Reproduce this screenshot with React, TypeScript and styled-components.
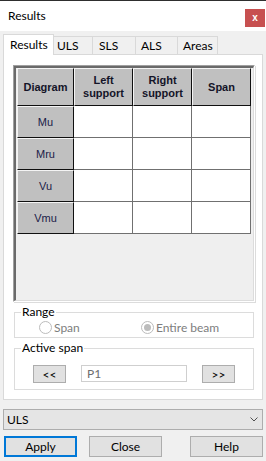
import React from "react";
import styled, { createGlobalStyle } from "styled-components";

const GlobalStyle = createGlobalStyle`
    html, body {
        margin: 0;
        padding: 0;
        background: #f0f0f0;
    }
    * {
        box-sizing: border-box;
    }
`;

const rows = ["Mu", "Mru", "Vu", "Vmu"];
const tabs = [
    { label: "Results", width: 51, pad: 6 },
    { label: "ULS", width: 40, pad: 3 },
    { label: "SLS", width: 44, pad: 6 },
    { label: "ALS", width: 43, pad: 5 },
    { label: "Areas", width: 41, pad: 5 },
];

export default function App() {
    return (
        <Window>
            <GlobalStyle />
            <TitleBar>
                <Title>Results</Title>
                <CloseButton>x</CloseButton>
            </TitleBar>

            <TabRow>
                {tabs.map((t, i) => (
                    <Tab key={t.label} $active={i === 0} $width={t.width} $pad={t.pad}>
                        {t.label}
                    </Tab>
                ))}
            </TabRow>

            <Panel>
                <GridFrame>
                    <GridInner>
                        <Table>
                            <HeaderCell>Diagram</HeaderCell>
                            <HeaderCell>
                                Left
                                <br />
                                support
                            </HeaderCell>
                            <HeaderCell>
                                Right
                                <br />
                                support
                            </HeaderCell>
                            <HeaderCell>Span</HeaderCell>
                            {rows.map((r) => (
                                <React.Fragment key={r}>
                                    <RowLabel>{r}</RowLabel>
                                    <DataCell />
                                    <DataCell />
                                    <DataCell />
                                </React.Fragment>
                            ))}
                        </Table>
                    </GridInner>
                </GridFrame>

                <Group $gap={3}>
                    <Legend>Range</Legend>
                    <RadioRow>
                        <RadioItem>
                            <RadioCircle />
                            Span
                        </RadioItem>
                        <RadioItem>
                            <RadioCircle $checked />
                            Entire beam
                        </RadioItem>
                    </RadioRow>
                </Group>

                <Group $gap={3}>
                    <Legend>Active span</Legend>
                    <SpanRow>
                        <SmallButton>&lt;&lt;</SmallButton>
                        <SpanInput>P1</SpanInput>
                        <SmallButton>&gt;&gt;</SmallButton>
                    </SpanRow>
                </Group>
            </Panel>

            <Select>
                <span>ULS</span>
                <svg width="8" height="5" viewBox="0 0 8 5">
                    <path d="M0.5 0.5 L4 4 L7.5 0.5" fill="none" stroke="#505050" strokeWidth="1" />
                </svg>
            </Select>

            <ButtonRow>
                <DialogButton $primary>Apply</DialogButton>
                <DialogButton>Close</DialogButton>
                <DialogButton $push>Help</DialogButton>
            </ButtonRow>
        </Window>
    );
}

const Window = styled.div`
    width: 266px;
    height: 461px;
    display: flex;
    flex-direction: column;
    overflow: hidden;
    background: #f0f0f0;
    border-top: 1px solid #2e2e2e;
    font-family: Lato, "Liberation Sans", sans-serif;
    font-size: 12px;
    color: #000;
`;

const TitleBar = styled.div`
    height: 30px;
    flex: none;
    display: flex;
    align-items: flex-start;
    justify-content: space-between;
    padding: 0 1px 0 8px;
    background: #fff;
`;

const Title = styled.div`
    margin-top: 7px;
    line-height: 15px;
    font-size: 12px;
`;

const CloseButton = styled.div`
    width: 20px;
    height: 18px;
    margin-top: 8px;
    background: #c75050;
    color: #fff;
    font-family: "Liberation Sans", Arial, sans-serif;
    font-weight: bold;
    font-size: 10px;
    display: flex;
    align-items: center;
    justify-content: center;
    padding-bottom: 1px;
`;

const TabRow = styled.div`
    height: 20px;
    margin-top: 3px;
    padding-left: 3px;
    display: flex;
    align-items: flex-start;
    position: relative;
    z-index: 1;
`;

const Tab = styled.div<{ $active?: boolean; $width: number; $pad: number }>`
    width: ${(p) => p.$width}px;
    height: ${(p) => (p.$active ? 21 : 18)}px;
    margin-top: ${(p) => (p.$active ? 0 : 2)}px;
    margin-left: ${(p) => (p.$active ? 0 : -1)}px;
    padding: ${(p) => (p.$active ? 2 : 1)}px 0 0 ${(p) => p.$pad}px;
    line-height: 15px;
    border: 1px solid #d9d9d9;
    border-bottom: none;
    background: ${(p) => (p.$active ? "#fff" : "#f0f0f0")};
    position: relative;
    z-index: ${(p) => (p.$active ? 2 : 1)};
    white-space: nowrap;
`;

const Panel = styled.div`
    height: 346px;
    flex: none;
    margin: 0 3px;
    padding: 10px 0 0 9px;
    background: #fff;
    border: 1px solid #d9d9d9;
    display: flex;
    flex-direction: column;
`;

const GridFrame = styled.div`
    width: 242px;
    height: 237px;
    flex: none;
    border-top: 1px solid #a0a0a0;
    border-left: 1px solid #a0a0a0;
    border-right: 1px solid #fff;
    border-bottom: 1px solid #fff;
    box-shadow: 1px 1px 0 #dcdcdc;
`;

const GridInner = styled.div`
    height: 100%;
    background: #efefef;
    border-top: 2px solid #6a6a6a;
    border-left: 2px solid #6a6a6a;
    border-right: 1px solid #dcdcdc;
    border-bottom: 1px solid #dcdcdc;
    padding-left: 1px;
`;

const Table = styled.div`
    display: grid;
    grid-template-columns: 57px 59px 59px 59px;
    grid-template-rows: 38px repeat(4, 32px);
    font-family: "Liberation Sans", Arial, sans-serif;
    font-size: 11px;
`;

const FixedCell = styled.div`
    background: #c0c0c0;
    border-top: 1px solid #f4f4f4;
    border-left: 1px solid #f4f4f4;
    border-right: 1px solid #101010;
    border-bottom: 1px solid #101010;
    display: flex;
    align-items: center;
    justify-content: center;
    text-align: center;
`;

const HeaderCell = styled(FixedCell)`
    font-weight: bold;
    line-height: 13px;
    color: #141428;
`;

const RowLabel = styled(FixedCell)`
    color: #1b2148;
`;

const DataCell = styled.div`
    background: #fff;
    border-right: 1px solid #707070;
    border-bottom: 1px solid #707070;
`;

const Group = styled.fieldset<{ $gap: number }>`
    width: 240px;
    margin: ${(p) => p.$gap}px 0 0 1px;
    padding: 0 6px 0 6px;
    border: 1px solid #dcdcdc;
    min-width: 0;
`;

const Legend = styled.legend`
    padding: 0 1px;
    margin: 0;
    line-height: 14px;
    font-size: 12px;
    color: #000;
`;

const RadioRow = styled.div`
    display: grid;
    grid-template-columns: 102px auto;
    padding: 2px 0 3px 18px;
    color: #7d7d7d;
`;

const RadioItem = styled.div`
    display: flex;
    align-items: center;
    gap: 2px;
    height: 13px;
    line-height: 13px;
`;

const RadioCircle = styled.span<{ $checked?: boolean }>`
    width: 13px;
    height: 13px;
    border-radius: 50%;
    border: 1px solid #bcbcbc;
    background: #fff;
    display: flex;
    align-items: center;
    justify-content: center;
    &::after {
        content: "";
        display: ${(p) => (p.$checked ? "block" : "none")};
        width: 7px;
        height: 7px;
        border-radius: 50%;
        background: #bcbcbc;
    }
`;

const SpanRow = styled.div`
    display: flex;
    align-items: flex-start;
    padding: 10px 0 6px 12px;
`;

const SmallButton = styled.div`
    width: 33px;
    height: 18px;
    background: #e1e1e1;
    border: 1px solid #adadad;
    display: flex;
    align-items: center;
    justify-content: center;
    font-size: 12px;
`;

const SpanInput = styled.div`
    width: 106px;
    height: 17px;
    margin: 0 15px;
    padding-left: 5px;
    border: 1px solid #cfcfcf;
    background: #fff;
    color: #6d6d6d;
    line-height: 15px;
`;

const Select = styled.div`
    height: 21px;
    flex: none;
    margin: 9px 3px 0;
    padding: 0 4px 0 3px;
    background: #e5e5e5;
    border: 1px solid #adadad;
    display: flex;
    align-items: center;
    justify-content: space-between;
`;

const ButtonRow = styled.div`
    display: flex;
    margin-top: 6px;
    padding: 0 3px 0 4px;
`;

const DialogButton = styled.div<{ $primary?: boolean; $push?: boolean }>`
    width: 73px;
    height: 21px;
    margin-left: ${(p) => (p.$push ? "auto" : p.$primary ? "0" : "12px")};
    background: #e1e1e1;
    border: ${(p) => (p.$primary ? "2px solid #0078d7" : "1px solid #adadad")};
    display: flex;
    align-items: center;
    justify-content: center;
    font-size: 12px;
`;
